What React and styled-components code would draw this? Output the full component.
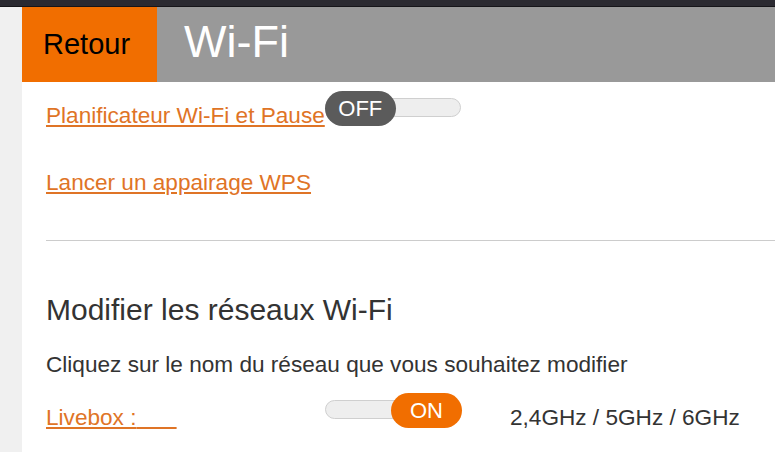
import React from "react";
import styled, { createGlobalStyle } from "styled-components";

const GlobalStyle = createGlobalStyle`
  html, body {
    margin: 0;
    padding: 0;
    background: #f0f0f0;
    font-family: "Liberation Sans", Arial, sans-serif;
  }
`;

const TopBar = styled.div`
  height: 6px;
  background: #2b2a31;
  border-bottom: 1px solid #161519;
`;

const Page = styled.div`
  display: flex;
  padding-left: 22px;
  min-height: 445px;
`;

const Main = styled.main`
  flex: 1;
  background: #fff;
  overflow: hidden;
`;

const Header = styled.header`
  display: flex;
  height: 75px;
`;

const BackButton = styled.button`
  width: 135px;
  border: 0;
  margin: 0;
  padding: 0 0 0 21px;
  background: #f16e00;
  color: #000;
  font: 29px "Liberation Sans", Arial, sans-serif;
  text-align: left;
  cursor: pointer;
`;

const Title = styled.h1`
  flex: 1;
  margin: 0;
  padding: 0 0 6px 27px;
  display: flex;
  align-items: center;
  background: #999;
  color: #fff;
  font-size: 45px;
  font-weight: normal;
`;

const Content = styled.section`
  padding-left: 24px;
`;

const Row = styled.div`
  display: flex;
  align-items: flex-end;
  margin-top: ${(p) => p.$top || 0}px;
`;

const Link = styled.a`
  display: block;
  color: #df7426;
  font-size: 22.6px;
  line-height: 26px;
  text-decoration: underline;
  text-underline-offset: 2px;
  white-space: nowrap;
  cursor: pointer;
  margin-top: ${(p) => p.$top || 0}px;
`;

const NameCell = styled.div`
  width: 279px;
`;

const Redacted = styled.span`
  color: #fff;
  text-decoration-color: #fff;
`;

const Switch = styled.div`
  position: relative;
  width: 137px;
  height: 35px;
  margin-bottom: 3px;
  display: flex;
  align-items: center;
  justify-content: ${(p) => (p.$on ? "flex-end" : "flex-start")};
  flex-shrink: 0;

  &::before {
    content: "";
    position: absolute;
    left: 0;
    right: 1px;
    top: 7px;
    height: 17px;
    border: 1px solid #cfcfcf;
    border-radius: 10px;
    background: #eeeeee;
  }
`;

const Knob = styled.span`
  position: relative;
  width: 71px;
  height: 35px;
  border-radius: 18px;
  background: ${(p) => (p.$on ? "#f16e00" : "#5b5b5b")};
  color: #fff;
  font-size: 22px;
  display: flex;
  align-items: center;
  justify-content: center;
`;

const Separator = styled.hr`
  margin: 44px 0 0;
  border: 0;
  border-top: 1px solid #cccccc;
  height: 0;
`;

const Heading = styled.h2`
  margin: 51px 0 0;
  color: #333;
  font-size: 30px;
  line-height: 35px;
  font-weight: normal;
`;

const Text = styled.p`
  margin: 25px 0 0;
  color: #333;
  font-size: 22.6px;
  line-height: 26px;
`;

const Bands = styled.span`
  display: block;
  margin-left: 48px;
  color: #333;
  font-size: 22.6px;
  line-height: 26px;
`;

function Toggle({ on }) {
  return (
    <Switch $on={on}>
      <Knob $on={on}>{on ? "ON" : "OFF"}</Knob>
    </Switch>
  );
}

export default function App() {
  return (
    <>
      <GlobalStyle />
      <TopBar />
      <Page>
        <Main>
          <Header>
            <BackButton>Retour</BackButton>
            <Title>Wi-Fi</Title>
          </Header>
          <Content>
            <Row $top={9}>
              <Link>Planificateur Wi-Fi et Pause</Link>
              <Toggle on={false} />
            </Row>
            <Link $top={41}>Lancer un appairage WPS</Link>
            <Separator />
            <Heading>Modifier les réseaux Wi-Fi</Heading>
            <Text>Cliquez sur le nom du réseau que vous souhaitez modifier</Text>
            <Row $top={15}>
              <NameCell>
                <Link>
                  Livebox :<Redacted>&nbsp;xxx</Redacted>
                </Link>
              </NameCell>
              <Toggle on />
              <Bands>2,4GHz / 5GHz / 6GHz</Bands>
            </Row>
          </Content>
        </Main>
      </Page>
    </>
  );
}
